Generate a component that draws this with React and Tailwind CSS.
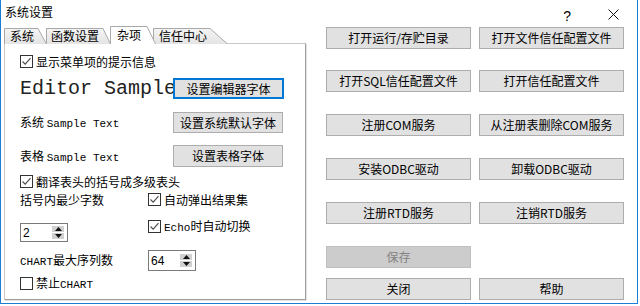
import React from "react";

const CJK = "font-['Noto_Sans_CJK_SC','Noto_Sans_CJK_SC',sans-serif]";
const MONO = "font-['Liberation_Mono',monospace]";

function Check({ checked }) {
  return (
    <span className="relative w-[13px] h-[13px] border border-[#333333] bg-white shrink-0">
      {checked && (
        <svg className="absolute inset-0" width="11" height="11" viewBox="0 0 11 11">
          <path d="M1.5 5.5 L4.2 8.2 L9.5 2.2" stroke="#4a4a4a" strokeWidth="1.1" fill="none" />
        </svg>
      )}
    </span>
  );
}

function CheckRow({ checked, children, className = "" }) {
  return (
    <div className={`flex items-center gap-[3px] h-[13px] ${className}`}>
      <Check checked={checked} />
      <span className="text-[12px] leading-none whitespace-nowrap">{children}</span>
    </div>
  );
}

function Spin({ value, className = "" }) {
  return (
    <div className={`flex items-center border border-[#7a7a7a] bg-white pl-[2px] pr-[3px] ${className}`}>
      <span className="flex-1 text-[12px] leading-none font-['Liberation_Sans',sans-serif]">{value}</span>
      <div className="flex flex-col gap-[1px]">
        <div className="w-[12px] h-[6px] bg-[#d0d0d0] flex items-center justify-center">
          <svg width="7" height="4" viewBox="0 0 7 4"><path d="M0 4 L3.5 0 L7 4Z" fill="#111" /></svg>
        </div>
        <div className="w-[12px] h-[6px] bg-[#d0d0d0] flex items-center justify-center">
          <svg width="7" height="4" viewBox="0 0 7 4"><path d="M0 0 L3.5 4 L7 0Z" fill="#111" /></svg>
        </div>
      </div>
    </div>
  );
}

function Btn({ children, disabled, focus, className = "" }) {
  const look = disabled
    ? "bg-[#cccccc] border border-[#bfbfbf] text-[#838383]"
    : focus
    ? "bg-[#e1e1e1] border-2 border-[#0078d7] text-black"
    : "bg-[#e1e1e1] border border-[#adadad] text-black";
  return (
    <div className={`flex items-center justify-center text-[12px] leading-none whitespace-nowrap ${look} ${className}`}>
      {children}
    </div>
  );
}

function Tab({ label, w, h, slant, pl, selected, className = "" }) {
  return (
    <div className={`relative shrink-0 flex items-center ${selected ? "z-10" : ""} ${className}`} style={{ width: w, height: h }}>
      <svg className="absolute inset-0" width={w} height={h} viewBox={`0 0 ${w} ${h}`}>
        <defs>
          <linearGradient id="tabg" x1="0" y1="0" x2="0" y2="1">
            <stop offset="0" stopColor="#f4f4f4" />
            <stop offset="1" stopColor="#e4e4e4" />
          </linearGradient>
        </defs>
        <path
          d={`M0.5 ${h} L0.5 0.5 L${w - slant} 0.5 L${w - 0.5} ${h}`}
          fill={selected ? "#ffffff" : "url(#tabg)"}
          stroke="#a9a9a9"
          strokeWidth="1"
        />
      </svg>
      <span className="relative text-[12px] leading-none" style={{ paddingLeft: pl }}>{label}</span>
    </div>
  );
}

export default function App() {
  return (
    <div className={`w-[640px] h-[306px] bg-white text-black ${CJK}`}>
      <div className="w-[638px] h-[304px] border-l border-r border-b border-[#1b7ed6] flex flex-col">
        {/* title bar */}
        <div className="h-[26px] flex items-start pt-[6px]">
          <span className="ml-[4px] text-[12px] leading-none">系统设置</span>
          <span className="ml-auto mt-[3px] text-[14px] leading-none font-['Liberation_Sans',sans-serif]">?</span>
          <svg className="ml-[37px] mr-[18px] mt-[3px]" width="11" height="11" viewBox="0 0 11 11">
            <path d="M0.5 0.5 L10.5 10.5 M10.5 0.5 L0.5 10.5" stroke="#111" strokeWidth="1" />
          </svg>
        </div>

        <div className="flex">
          {/* tabbed panel */}
          <div className="ml-[3px] w-[302px] flex flex-col">
            <div className="flex items-end h-[18px] -mb-[1px]">
              <Tab label="系统" w={43} h={16} slant={9} pl={6} />
              <Tab label="函数设置" w={65} h={16} slant={8} pl={5} className="-ml-[1px]" />
              <Tab label="杂项" w={46} h={18} slant={9} pl={7} selected className="-ml-[1px]" />
              <Tab label="信任中心" w={75} h={16} slant={18} pl={6} className="-ml-[3px]" />
            </div>
            <div className="h-[257px] border border-[#c9c9c9] border-r-[#9e9e9e] border-b-[#9e9e9e] shadow-[1px_1px_0_#e2e2e2] bg-white pl-[15px] flex flex-col">
              <CheckRow checked className="mt-[11px]">显示菜单项的提示信息</CheckRow>

              <div className="mt-[10px] h-[21px] flex items-center">
                <span className={`w-[153px] text-[20px] leading-none text-[#222] whitespace-nowrap ${MONO}`}>Editor Sample</span>
                <Btn focus className="w-[111px] h-[21px]">设置编辑器字体</Btn>
              </div>

              <div className="mt-[13px] h-[21px] flex items-center">
                <span className="w-[153px] text-[12px] leading-none whitespace-nowrap">
                  系统 <span className={`text-[11px] ${MONO}`}>Sample Text</span>
                </span>
                <Btn className="w-[110px] h-[21px]">设置系统默认字体</Btn>
              </div>

              <div className="mt-[12px] h-[22px] flex items-center">
                <span className="w-[153px] text-[12px] leading-none whitespace-nowrap pt-[2px]">
                  表格 <span className={`text-[11px] ${MONO}`}>Sample Text</span>
                </span>
                <Btn className="w-[110px] h-[22px]">设置表格字体</Btn>
              </div>

              <CheckRow checked className="mt-[8px]">翻译表头的括号成多级表头</CheckRow>

              <div className="mt-[5px] h-[13px] flex items-center">
                <span className="w-[128px] text-[12px] leading-none">括号内最少字数</span>
                <CheckRow checked>自动弹出结果集</CheckRow>
              </div>

              <div className="mt-[14px] h-[24px] flex items-start">
                <Spin value="2" className="mt-[3px] w-[48px] h-[19px]" />
                <CheckRow checked className="ml-[80px]">
                  <span className={`text-[11px] ${MONO}`}>Echo</span>时自动切换
                </CheckRow>
              </div>

              <div className="mt-[6px] h-[21px] flex items-center">
                <span className="w-[128px] text-[12px] leading-none whitespace-nowrap">
                  <span className={`text-[11px] ${MONO}`}>CHART</span>最大序列数
                </span>
                <Spin value="64" className="w-[48px] h-[21px]" />
              </div>

              <CheckRow className="mt-[6px]">
                禁止<span className={`text-[11px] ${MONO}`}>CHART</span>
              </CheckRow>
            </div>
          </div>

          {/* button column */}
          <div className="ml-[20px] mt-[1px] grid grid-cols-[145px_145px] gap-x-[8px]">
            <Btn className="h-[22px]">打开运行/存贮目录</Btn>
            <Btn className="h-[22px]">打开文件信任配置文件</Btn>
            <Btn className="h-[22px] mt-[21px]">打开SQL信任配置文件</Btn>
            <Btn className="h-[22px] mt-[21px]">打开信任配置文件</Btn>
            <Btn className="h-[22px] mt-[21px]">注册COM服务</Btn>
            <Btn className="h-[22px] mt-[21px]">从注册表删除COM服务</Btn>
            <Btn className="h-[22px] mt-[22px]">安装ODBC驱动</Btn>
            <Btn className="h-[22px] mt-[22px]">卸载ODBC驱动</Btn>
            <Btn className="h-[22px] mt-[21px]">注册RTD服务</Btn>
            <Btn className="h-[22px] mt-[21px]">注销RTD服务</Btn>
            <Btn disabled className="h-[22px] mt-[22px]">保存</Btn>
            <div />
            <Btn className="h-[22px] mt-[9px]">关闭</Btn>
            <Btn className="h-[22px] mt-[9px]">帮助</Btn>
          </div>
        </div>
      </div>
    </div>
  );
}
